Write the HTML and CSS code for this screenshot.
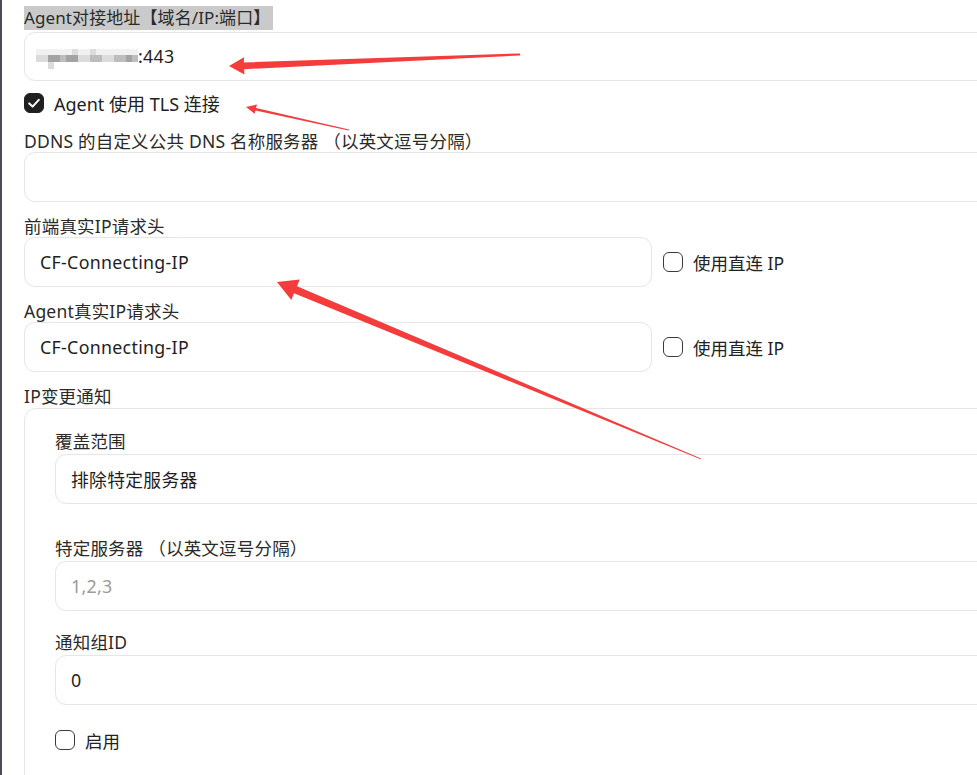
FILE: index.html
```html
<!DOCTYPE html>
<html lang="zh-CN">
<head>
<meta charset="utf-8">
<title>Agent 设置</title>
<link rel="stylesheet" href="styles.css">
</head>
<body>
<div class="frame">
  <div class="edge"></div>
  <main class="form">
    <div class="field first">
      <div class="label"><span class="selected">Agent对接地址【域名/IP:端口】</span></div>
      <div class="input">
        <span class="blur">
          <span class="c1"></span><span class="c1"></span><span class="c1"></span><span class="c1"></span><span class="c1"></span><span class="c1"></span><span class="c2"></span><span class="c1"></span><span class="c1"></span><span class="c2"></span><span class="c1"></span><span class="c1"></span><span class="c1"></span><span class="c1"></span><span class="c1"></span><span class="c1"></span><span class="c1"></span>
          <span class="c2"></span><span class="c2"></span><span class="c4"></span><span class="c4"></span><span class="c3"></span><span class="c4"></span><span class="c4"></span><span class="c2"></span><span class="c2"></span><span class="c3"></span><span class="c3"></span><span class="c2"></span><span class="c2"></span><span class="c3"></span><span class="c3"></span><span class="c4"></span><span class="c3"></span>
          <span class="c0"></span><span class="c0"></span><span class="c2"></span><span class="c0"></span><span class="c0"></span><span class="c0"></span><span class="c0"></span><span class="c0"></span><span class="c0"></span><span class="c0"></span><span class="c0"></span><span class="c0"></span><span class="c0"></span><span class="c0"></span><span class="c0"></span><span class="c0"></span><span class="c0"></span>
        </span><span class="value">:443</span>
      </div>
    </div>

    <div class="check-row tls">
      <span class="box checked"><svg viewBox="0 0 20 20" width="20" height="20"><path d="M5.2 10.4 L8.6 13.6 L14.8 6.8" fill="none" stroke="#fff" stroke-width="2" stroke-linecap="round" stroke-linejoin="round"/></svg></span>
      <span class="check-text">Agent 使用 TLS 连接</span>
    </div>

    <div class="field">
      <div class="label">DDNS 的自定义公共 DNS 名称服务器 （以英文逗号分隔）</div>
      <div class="input"></div>
    </div>

    <div class="field">
      <div class="label">前端真实IP请求头</div>
      <div class="inline">
        <div class="input short"><span class="value">CF-Connecting-IP</span></div>
        <div class="check-row side"><span class="box"></span><span class="check-text">使用直连 IP</span></div>
      </div>
    </div>

    <div class="field">
      <div class="label">Agent真实IP请求头</div>
      <div class="inline">
        <div class="input short"><span class="value">CF-Connecting-IP</span></div>
        <div class="check-row side"><span class="box"></span><span class="check-text">使用直连 IP</span></div>
      </div>
    </div>

    <div class="field group">
      <div class="label">IP变更通知</div>
      <div class="card">
        <div class="sub scope">
          <div class="label">覆盖范围</div>
          <div class="input"><span class="value">排除特定服务器</span></div>
        </div>
        <div class="sub servers">
          <div class="label">特定服务器 （以英文逗号分隔）</div>
          <div class="input"><span class="placeholder">1,2,3</span></div>
        </div>
        <div class="sub">
          <div class="label">通知组ID</div>
          <div class="input"><span class="value">0</span></div>
        </div>
        <div class="check-row enable"><span class="box"></span><span class="check-text">启用</span></div>
      </div>
    </div>
  </main>

  <svg class="annot" viewBox="0 0 977 775" width="977" height="775">
    <polygon points="229,66 244,57.2 243.9,62.4 520,53.4 520.2,55.4 244.1,69.2 244.4,74.6" fill="#f53c3c"/>
    <polygon points="246,107 257,104.4 256,107.9 349,129.6 348.6,130.6 255.5,110.6 254.6,113.8" fill="#f53c3c"/>
    <polygon points="277,282 299.7,279.5 297,286.2 701,458.6 700.5,459.2 294,293.2 291.3,299.9" fill="#f53c3c"/>
  </svg>
</div>
</body>
</html>
```

FILE: styles.css
```css
html, body {
  margin: 0;
  padding: 0;
  background: #fff;
  overflow: hidden;
}

body {
  font-family: "Noto Sans", "Noto Sans CJK SC", sans-serif;
  color: #222;
}

.frame {
  position: relative;
  width: 977px;
  height: 775px;
  overflow: hidden;
  display: flex;
}

.edge {
  flex: 0 0 2px;
  background: #4a4d52;
}

.form {
  flex: 0 0 1060px;
  padding: 6px 0 0 22px;
  display: flex;
  flex-direction: column;
}

.field {
  display: flex;
  flex-direction: column;
  margin-bottom: 13px;
}

.field.first {
  margin-bottom: 0;
}

.label {
  font-size: 17.5px;
  letter-spacing: 0.2px;
  line-height: 22px;
  color: #2a2a2a;
  white-space: nowrap;
}

.field.first .label {
  font-size: 17px;
  letter-spacing: 0.1px;
  line-height: 24px;
  margin-bottom: 2px;
}

.selected {
  background: #cacaca;
  padding: 0 3px 0 0;
  display: inline-block;
  line-height: 24px;
}

.input {
  box-sizing: border-box;
  height: 50px;
  border: 1px solid #e6e6e6;
  border-radius: 11px;
  display: flex;
  align-items: center;
  padding: 0 15px 0 10px;
  font-size: 17.8px;
  letter-spacing: 0.3px;
  color: #1e1e1e;
  background: #fff;
}

.field.first .input {
  height: 49px;
  padding-left: 11px;
}

.input .value,
.input .placeholder {
  padding-left: 5px;
}

.placeholder {
  color: #9a9a9a;
}

.blur {
  display: grid;
  grid-template-columns: repeat(17, 6px);
  grid-template-rows: 6px 7px 7px;
  margin-top: 5px;
}

.blur .c0 { background: transparent; }
.blur .c1 { background: #f1f1f1; }
.blur .c2 { background: #dcdcdc; }
.blur .c3 { background: #bdbdbd; }
.blur .c4 { background: #a3a3a3; }

.field.first .value {
  padding-left: 0;
  margin-top: -2px;
}

.check-row {
  display: flex;
  align-items: center;
  gap: 10px;
  height: 24px;
}

.check-row.tls {
  margin: 10px 0 15px;
}

.box {
  box-sizing: border-box;
  width: 20px;
  height: 20px;
  border: 1.5px solid #3a3a3a;
  border-radius: 6px;
  background: #fff;
  flex: 0 0 auto;
}

.box.checked {
  background: #202020;
  border-color: #202020;
  display: flex;
  align-items: center;
  justify-content: center;
}

.box.checked svg {
  display: block;
  margin: -1.5px;
}

.check-text {
  font-size: 17.5px;
  color: #222;
  white-space: nowrap;
}

.tls .check-text {
  font-size: 18px;
}

.inline {
  display: flex;
  align-items: center;
  gap: 11px;
}

.input.short {
  width: 628px;
}

.card {
  box-sizing: border-box;
  margin-top: 1px;
  border: 1px solid #e6e6e6;
  border-radius: 12px;
  padding: 21px 0 40px 30px;
  display: flex;
  flex-direction: column;
}

.sub {
  display: flex;
  flex-direction: column;
}

.sub .label {
  margin-bottom: 2px;
}

.sub.scope {
  margin-bottom: 33px;
}

.sub.servers {
  margin-bottom: 20px;
}

.check-row.enable {
  margin-top: 23px;
}

.annot {
  position: absolute;
  left: 0;
  top: 0;
  pointer-events: none;
}
```
